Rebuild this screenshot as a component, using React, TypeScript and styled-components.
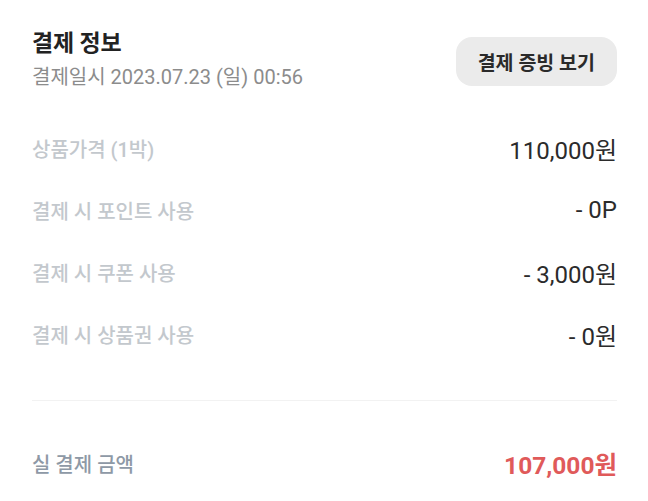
import React, { FC } from "react";
import styled, { createGlobalStyle } from "styled-components";

const GlobalStyle = createGlobalStyle`
  html, body {
    margin: 0;
    padding: 0;
    background: #ffffff;
  }
  body {
    font-family: Roboto, "Noto Sans CJK KR", sans-serif;
    -webkit-font-smoothing: antialiased;
  }
`;

const Wrapper = styled.section`
  width: 648px;
  box-sizing: border-box;
  padding: 27px 31px 0 32px;
`;

const Header = styled.header`
  display: flex;
  justify-content: space-between;
  align-items: flex-start;
`;

const HeaderText = styled.div`
  display: flex;
  flex-direction: column;
  gap: 3px;
`;

const Title = styled.h2`
  margin: 0;
  font-size: 23px;
  font-weight: 700;
  line-height: 34px;
  color: #222222;
  letter-spacing: -0.2px;
`;

const PaidAt = styled.span`
  font-size: 20px;
  font-weight: 400;
  line-height: 26px;
  color: #8c8c8c;
`;

const ReceiptButton = styled.button`
  margin-top: 10px;
  height: 49px;
  padding: 0 22px;
  border: none;
  border-radius: 16px;
  background: #ebebeb;
  font-family: inherit;
  font-size: 19.5px;
  font-weight: 700;
  color: #2a2a2a;
  cursor: pointer;
`;

const List = styled.dl`
  margin: 27px 0 0;
  display: flex;
  flex-direction: column;
`;

const Row = styled.div`
  display: flex;
  justify-content: space-between;
  align-items: center;
  height: 62px;
`;

const Label = styled.dt<{ $strong?: boolean }>`
  margin: 0;
  font-size: 20px;
  font-weight: 500;
  color: ${(p) => (p.$strong ? "#8e99a6" : "#c3c8cd")};
`;

const Value = styled.dd<{ $total?: boolean }>`
  margin: 0;
  font-size: ${(p) => (p.$total ? "24.5px" : "24px")};
  font-weight: ${(p) => (p.$total ? 700 : 400)};
  color: ${(p) => (p.$total ? "#e05a5a" : "#2b2b2b")};
`;

const Divider = styled.hr`
  margin: 35px 0 31px;
  border: none;
  height: 1px;
  background: #f2f2f2;
`;

interface LineItem {
  label: string;
  value: string;
}

const items: LineItem[] = [
  { label: "상품가격 (1박)", value: "110,000원" },
  { label: "결제 시 포인트 사용", value: "- 0P" },
  { label: "결제 시 쿠폰 사용", value: "- 3,000원" },
  { label: "결제 시 상품권 사용", value: "- 0원" },
];

const PaymentInfo: FC = () => {
  return (
    <Wrapper>
      <Header>
        <HeaderText>
          <Title>결제 정보</Title>
          <PaidAt>결제일시 2023.07.23 (일) 00:56</PaidAt>
        </HeaderText>
        <ReceiptButton>결제 증빙 보기</ReceiptButton>
      </Header>

      <List>
        {items.map((item) => (
          <Row key={item.label}>
            <Label>{item.label}</Label>
            <Value>{item.value}</Value>
          </Row>
        ))}
      </List>

      <Divider />

      <Row>
        <Label $strong>실 결제 금액</Label>
        <Value $total>107,000원</Value>
      </Row>
    </Wrapper>
  );
};

const App: FC = () => (
  <>
    <GlobalStyle />
    <PaymentInfo />
  </>
);

export default App;
